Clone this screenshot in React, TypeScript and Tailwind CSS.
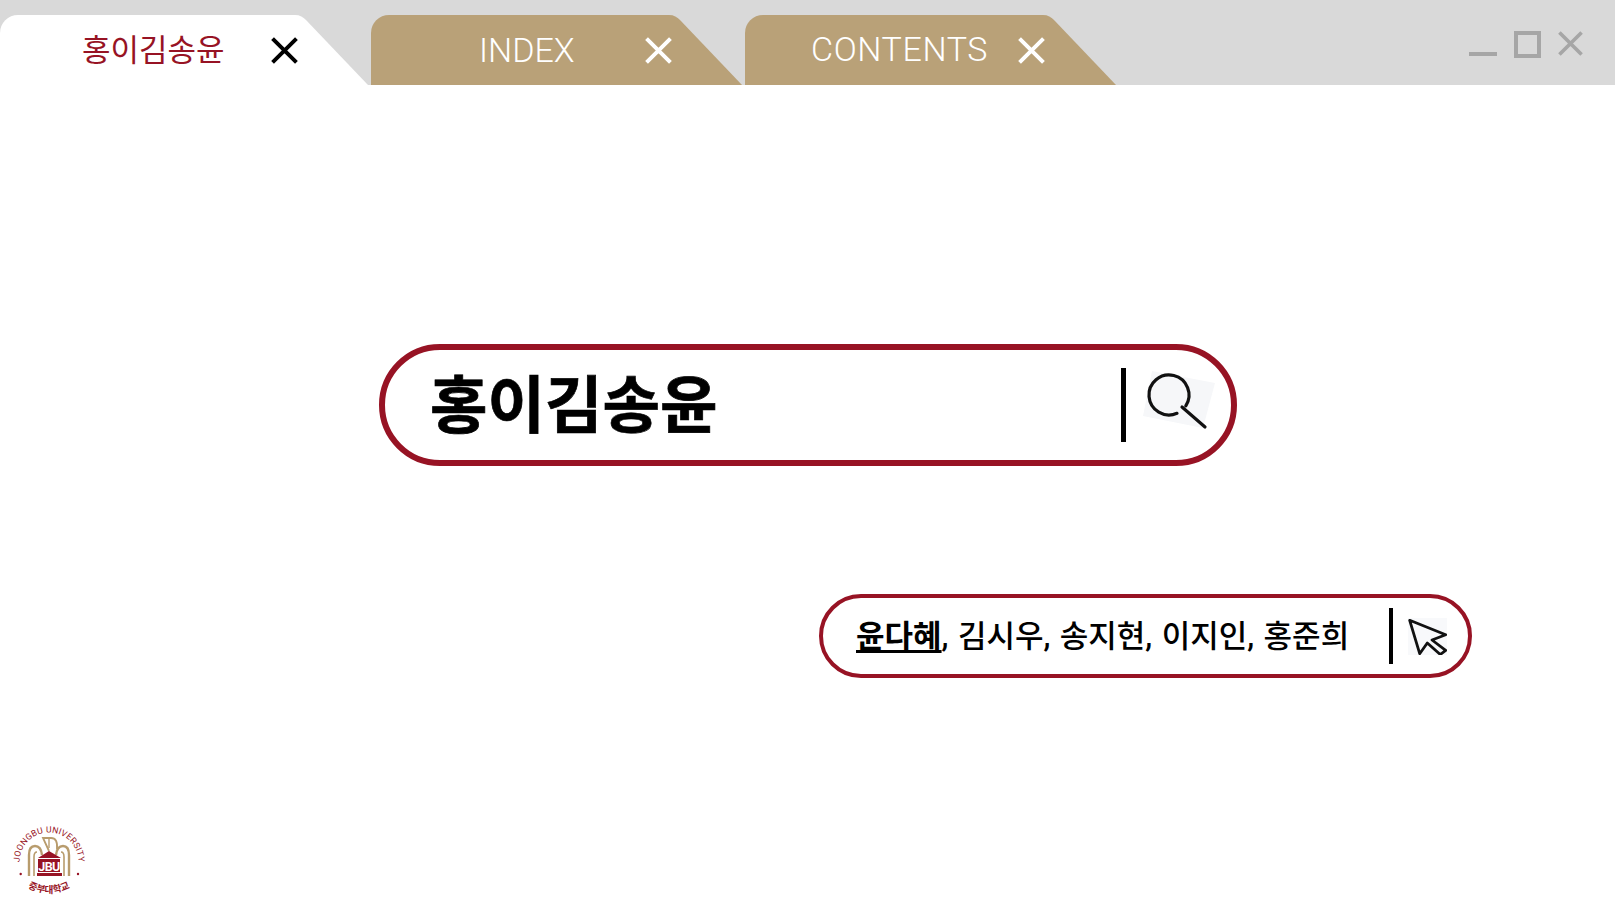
const FONT = "font-['Roboto','Noto_Sans_CJK_KR',sans-serif]";

function XIcon({ color, className }: { color: string; className: string }) {
  return (
    <svg viewBox="0 0 26 26" className={className} fill="none" stroke={color} strokeWidth="3.8">
      <path d="M1.5 1.5 L24.5 24.5 M24.5 1.5 L1.5 24.5" />
    </svg>
  );
}

function Ear({ fill }: { fill: string }) {
  return (
    <svg viewBox="0 0 76 70" className="w-[76px] h-[70px] shrink-0 -ml-px">
      <path d="M0 0 H2 C7 0 10 2 13 5 L75 70 H0 Z" fill={fill} />
    </svg>
  );
}

function Tab({
  label, fill, bodyClass, labelClass, xColor,
}: {
  label: string; fill: string; bodyClass: string; labelClass: string; xColor: string;
}) {
  return (
    <div className="flex h-[70px] shrink-0">
      <div className={`flex items-start rounded-tl-[18px] ${bodyClass}`}>
        <span className={`block shrink-0 whitespace-nowrap ${labelClass}`}>{label}</span>
        <XIcon color={xColor} className="w-[27px] h-[27px] shrink-0 mt-[22px] relative z-10" />
      </div>
      <Ear fill={fill} />
    </div>
  );
}

function Logo() {
  return (
    <svg viewBox="0 0 76 76" className="w-[76px] h-[76px]">
      <defs>
        <path id="arc" d="M9.6 48 A29.5 29.5 0 1 1 66.4 48" />
        <path id="arc2" d="M12 63 Q38 79 64 63" />
      </defs>
      <text fontSize="8.6" fill="#971324" fontFamily="'Roboto',sans-serif" letterSpacing=".2">
        <textPath href="#arc" startOffset="50%" textAnchor="middle">JOONGBU UNIVERSITY</textPath>
      </text>
      <text fontSize="9.6" fontWeight="700" fill="#971324" fontFamily="'Noto Sans CJK KR',sans-serif">
        <textPath href="#arc2" startOffset="50%" textAnchor="middle">중부대학교</textPath>
      </text>
      <circle cx="9.7" cy="52" r="1.2" fill="#971324" />
      <circle cx="67" cy="52" r="1.2" fill="#971324" />
      <g fill="none" stroke="#b89c6d" strokeWidth="2.4">
        <path d="M18 54 V33 Q18 24 24 24 Q30 24 31 33" />
        <path d="M23 54 V35 Q23 30 26 30" strokeWidth="1.6" />
        <path d="M58 54 V33 Q58 24 52 24 Q46 24 45 33" />
        <path d="M53 54 V35 Q53 30 50 30" strokeWidth="1.6" />
        <path d="M38 29 L32 16 H40 Q47 16 46 27" strokeWidth="1.8" />
        <path d="M38 17 V26" strokeWidth="1.4" />
      </g>
      <path d="M38 29 L50 36 H27 Z" fill="#971324" />
      <rect x="27" y="37" width="22" height="13" fill="#971324" />
      <rect x="26" y="51" width="25" height="3" fill="#971324" />
      <text x="38" y="49" textAnchor="middle" fontSize="12.5" fontWeight="700" fill="#fff" fontFamily="'Roboto',sans-serif" letterSpacing="-.6">JBU</text>
    </svg>
  );
}

export default function App() {
  return (
    <div className={`w-[1615px] h-[906px] bg-white overflow-hidden flex flex-col ${FONT}`}>
      <header className="h-[85px] bg-[#d9d9d9] flex items-end shrink-0">
        <Tab label="홍이김송윤" fill="#ffffff" bodyClass="bg-white w-[294px] pl-[82px]" labelClass="w-[189px] text-[31px] leading-[72px] text-[#971324]" xColor="#000000" />
        <div className="w-[2px] shrink-0" />
        <Tab label="INDEX" fill="#b9a178" bodyClass="bg-[#b9a178] w-[297px] pl-[108px]" labelClass="w-[166px] text-[34px] font-light leading-[70px] text-white" xColor="#ffffff" />
        <div className="w-[2px] shrink-0" />
        <Tab label="CONTENTS" fill="#b9a178" bodyClass="bg-[#b9a178] w-[297px] pl-[66px]" labelClass="w-[207px] text-[34px] font-light tracking-[0.6px] leading-[68px] text-white" xColor="#ffffff" />
        <div className="ml-auto self-start mt-[31px] mr-[32px] flex items-start">
          <div className="w-[28px] h-[4px] bg-[#a6a6a6] mt-[21px]" />
          <div className="w-[27px] h-[27px] border-[4px] border-[#a6a6a6] ml-[17px]" />
          <XIcon color="#a6a6a6" className="w-[25px] h-[25px] ml-[17px]" />
        </div>
      </header>

      <main className="flex-1 flex flex-col">
        <div className="mt-[259px] ml-[379px] w-[858px] h-[122px] rounded-full border-[6px] border-[#971324] flex items-center">
          <span className="ml-[45px] w-[691px] pt-[4px] text-[62.5px] font-bold leading-none text-black whitespace-nowrap [-webkit-text-stroke:0.7px_#000]">홍이김송윤</span>
          <div className="w-[5px] h-[74px] bg-black shrink-0" />
          <svg viewBox="0 0 76 60" className="w-[76px] h-[60px] ml-[16px] -mt-[4px] shrink-0 overflow-visible" fill="none">
            <path d="M10 -2 L73 10 L61 55 L1 43 Z" fill="#f6f7f9" />
            <path d="M35 40.3 A20 20 0 1 1 43.8 32.8" stroke="#111" strokeWidth="3.2" strokeLinecap="round" />
            <path d="M40 34 L63 54" stroke="#111" strokeWidth="3.2" strokeLinecap="round" />
          </svg>
        </div>

        <div className="mt-[128px] ml-[819px] w-[653px] h-[84px] rounded-full border-[4px] border-[#971324] flex items-center">
          <span className="ml-[33px] w-[533px] text-[31px] font-medium leading-none text-black whitespace-nowrap [word-spacing:1.7px]">
            <b className="font-bold underline underline-offset-[3px]">윤다혜</b>, 김시우, 송지현, 이지인, 홍준희
          </span>
          <div className="w-[4px] h-[56px] bg-black shrink-0" />
          <svg viewBox="0 0 39 37" className="w-[39px] h-[37px] ml-[15px] shrink-0" fill="none">
            <rect width="39" height="37" fill="#f8f9fb" />
            <path d="M1.7 2.3 L37.7 16.7 L24 22 L37.7 32.3 L32.3 36.5 L19.3 25 L11.7 35.7 Z" stroke="#111" strokeWidth="2.8" strokeLinejoin="round" />
          </svg>
        </div>

        <div className="mt-[144px] ml-[11px]">
          <Logo />
        </div>
      </main>
    </div>
  );
}
